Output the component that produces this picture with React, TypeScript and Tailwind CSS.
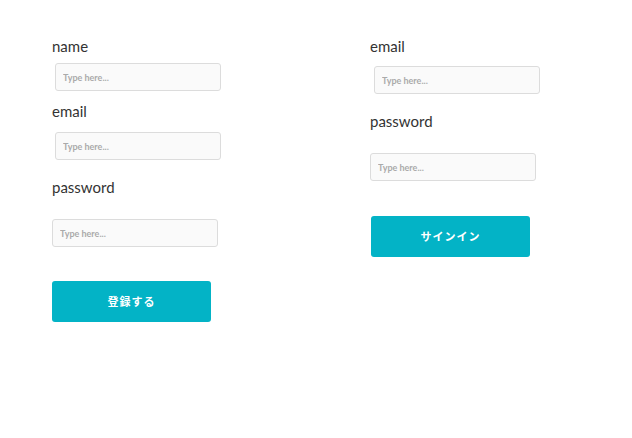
import React from "react";

const labelCls = "block text-[15px] leading-[20px] text-[#333] font-['Lato','Open_Sans',sans-serif]";
const inputCls =
  "block h-[28px] w-[166px] rounded-[3px] border border-[#dcdcdc] bg-[#fafafa] pl-[7px] text-[9px] font-bold text-[#555] placeholder:text-[#aaa] outline-none font-['Lato',sans-serif]";
const btnCls =
  "block h-[41px] w-[159px] rounded-[3px] bg-[#03b3c6] text-[11px] font-bold tracking-[1px] text-white font-['Noto_Sans_CJK_JP',sans-serif]";

function SignUp() {
  return (
    <form className="w-[318px]" onSubmit={(e) => e.preventDefault()}>
      <label className={labelCls}>name</label>
      <input className={`${inputCls} mt-[7px] ml-[3px]`} placeholder="Type here..." />
      <label className={`${labelCls} mt-[10px]`}>email</label>
      <input className={`${inputCls} mt-[11px] ml-[3px]`} placeholder="Type here..." />
      <label className={`${labelCls} mt-[17px]`}>password</label>
      <input type="password" className={`${inputCls} mt-[22px] w-[165px]`} placeholder="Type here..." />
      <button className={`${btnCls} mt-[34px]`}>登録する</button>
    </form>
  );
}

function SignIn() {
  return (
    <form className="w-[200px]" onSubmit={(e) => e.preventDefault()}>
      <label className={labelCls}>email</label>
      <input className={`${inputCls} mt-[10px] ml-[4px] w-[165px]`} placeholder="Type here..." />
      <label className={`${labelCls} mt-[17px]`}>password</label>
      <input type="password" className={`${inputCls} mt-[22px]`} placeholder="Type here..." />
      <button className={`${btnCls} mt-[35px] ml-[1px]`}>サインイン</button>
    </form>
  );
}

export default function App() {
  return (
    <div className="min-h-[438px] w-full bg-white pl-[52px] pt-[36px]">
      <div className="flex">
        <SignUp />
        <SignIn />
      </div>
    </div>
  );
}
